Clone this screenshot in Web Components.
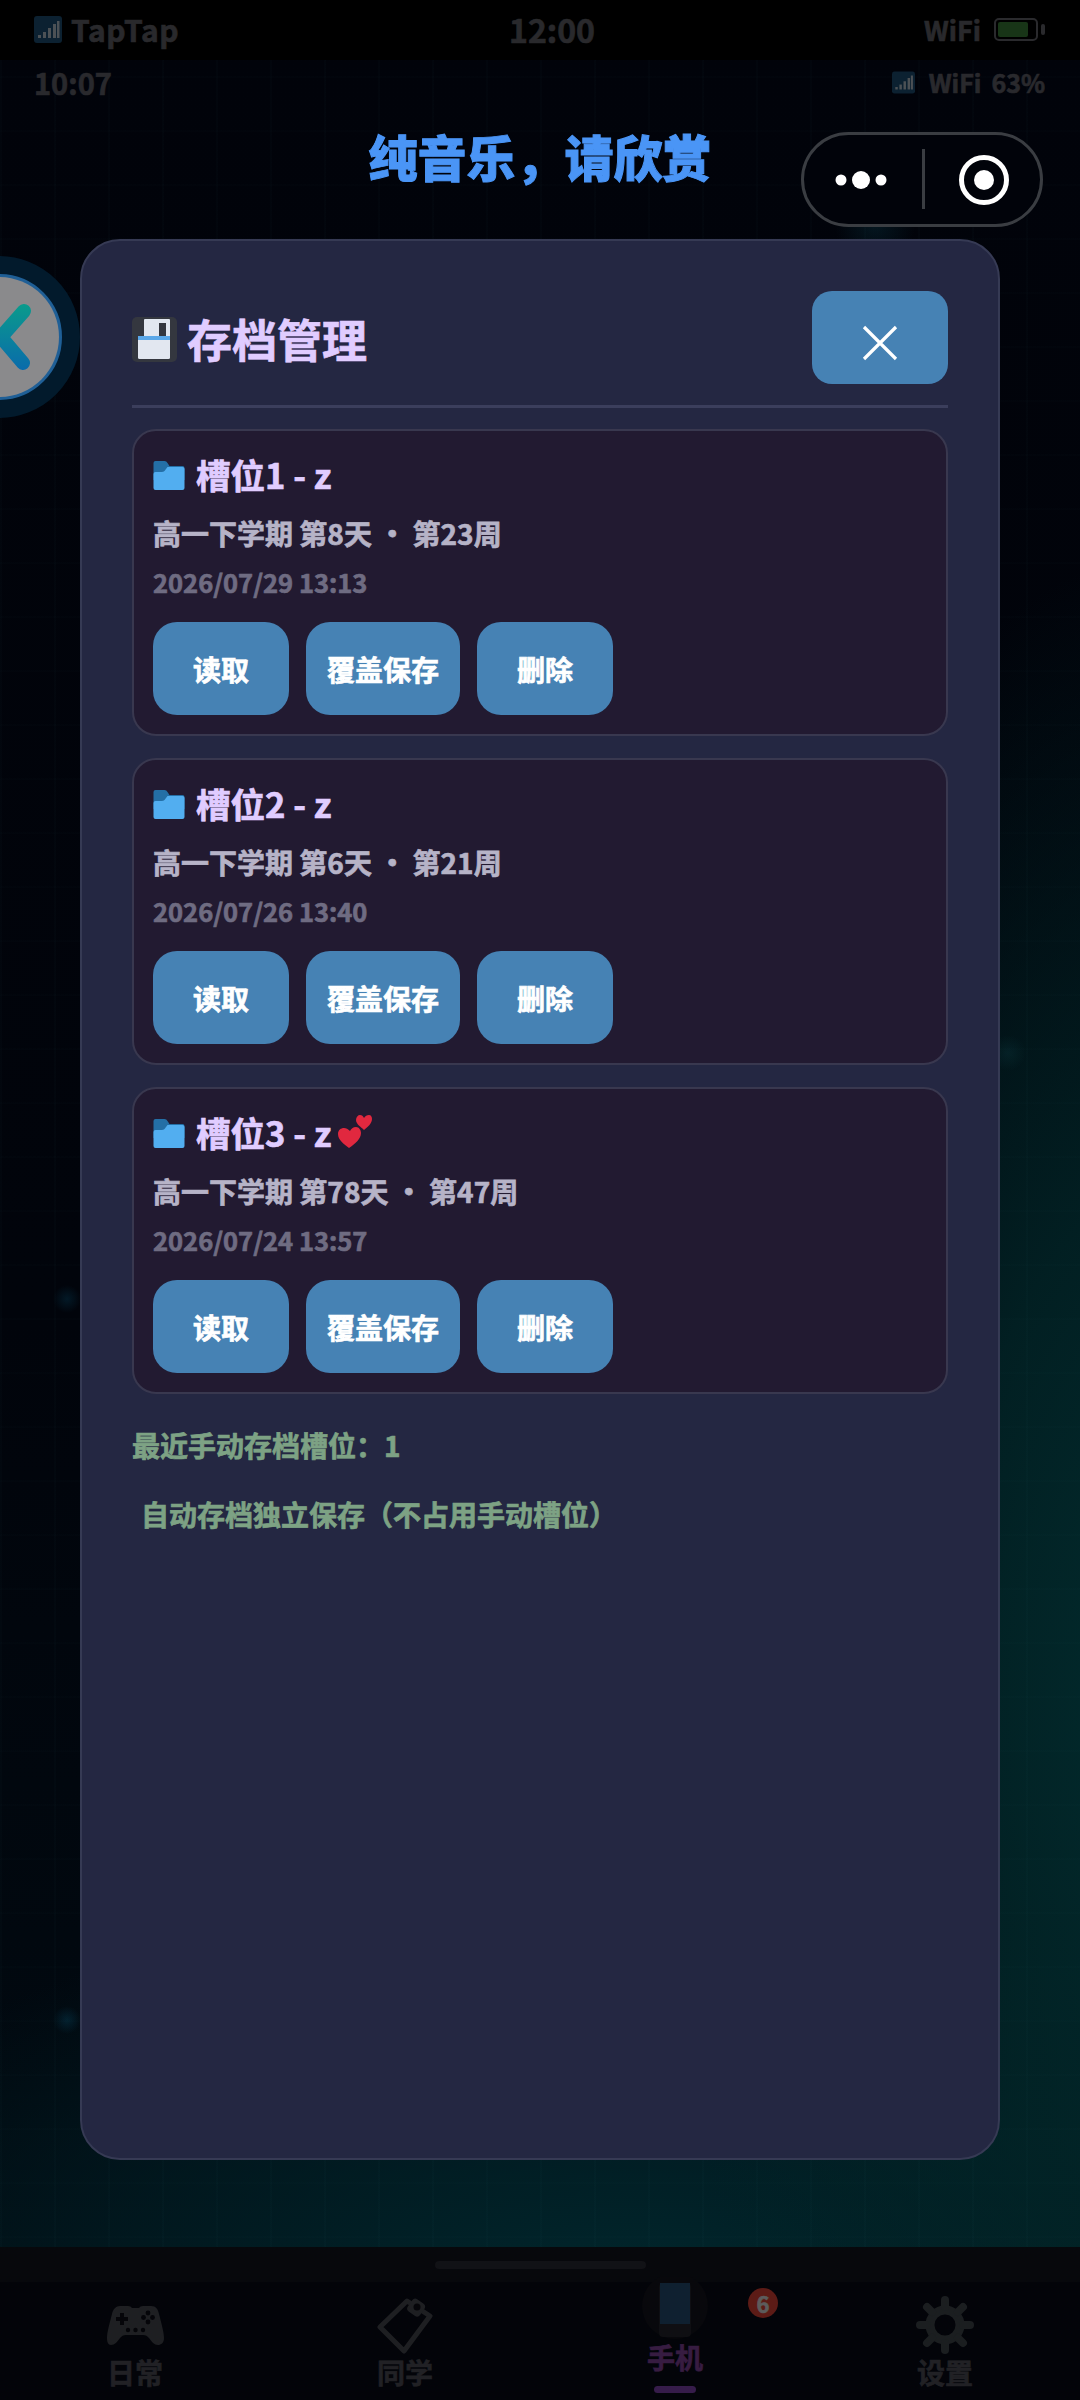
<!DOCTYPE html>
<html lang="zh">
<head>
<meta charset="utf-8">
<title>存档管理</title>
<style>
    html, body { margin: 0; padding: 0; background: #000; }
    body { font-family: "Noto Sans CJK SC", "Noto Sans", sans-serif; font-weight: 700; }
</style>
</head>
<body>

<phone-frame>
    <system-bar slot="system"></system-bar>
    <app-bar slot="appbar"></app-bar>
    <page-title slot="title">纯音乐，请欣赏</page-title>
    <capsule-menu slot="over"></capsule-menu>
    <back-fab slot="over"></back-fab>

    <save-modal slot="over" heading="存档管理">
        <save-slot name="槽位1 - z" term="高一下学期 第8天 · 第23周" date="2026/07/29 13:13">
            <save-button>读取</save-button>
            <save-button>覆盖保存</save-button>
            <save-button>删除</save-button>
        </save-slot>
        <save-slot name="槽位2 - z" term="高一下学期 第6天 · 第21周" date="2026/07/26 13:40">
            <save-button>读取</save-button>
            <save-button>覆盖保存</save-button>
            <save-button>删除</save-button>
        </save-slot>
        <save-slot name="槽位3 - z" term="高一下学期 第78天 · 第47周" date="2026/07/24 13:57" hearts>
            <save-button>读取</save-button>
            <save-button>覆盖保存</save-button>
            <save-button>删除</save-button>
        </save-slot>
        <save-note>最近手动存档槽位：1</save-note>
        <save-note indent>自动存档独立保存（不占用手动槽位）</save-note>
    </save-modal>

    <bottom-nav slot="nav">
        <nav-item label="日常">
            <svg width="57" height="40" viewBox="0 0 57 40">
                <path fill="#1e1f22" d="M13 1h8q3 0 4 2h7q1-2 4-2h8c5 0 7 3 8 8 2 8 5 18 5 24 0 5-3 7-6 7-4 0-6-3-9-7-2-2-3-3-6-3H19c-3 0-4 1-6 3-3 4-5 7-9 7-3 0-4-3-4-7 0-6 3-16 5-24 1-5 4-8 8-8z"/>
                <path fill="#050509" d="M13 8h4v4h4v4h-4v4h-4v-4H9v-4h4z"/>
                <g fill="#050509">
                    <circle cx="41" cy="8" r="2.4"/><circle cx="41" cy="17" r="2.4"/>
                    <circle cx="36.500" cy="12.500" r="2.400"/><circle cx="45.500" cy="12.500" r="2.400"/>
                    <circle cx="21" cy="25" r="2.200"/><circle cx="28.500" cy="25" r="2.200"/><circle cx="36" cy="25" r="2.200"/>
                </g>
            </svg>
        </nav-item>
        <nav-item label="同学">
            <svg width="58" height="58" viewBox="0 0 58 58">
                <path fill="none" stroke="#1e1f22" stroke-width="5" stroke-linejoin="round" d="M4 31L31 5 54 20 28 55z"/>
                <rect x="33" y="4" width="15" height="15" rx="4" transform="rotate(35 40 11)" fill="#1e1f22"/>
                <circle cx="41" cy="11" r="3.500" fill="#050509"/>
            </svg>
        </nav-item>
        <nav-item label="手机" active>
            <svg width="66" height="66" viewBox="0 0 66 66" style="margin-top:-6px;margin-bottom:-6px">
                <circle cx="33" cy="29" r="33" fill="#08080c"/>
                <rect x="17" y="6" width="32" height="54" rx="4" fill="#0f0f13"/>
                <rect x="18" y="6" width="30" height="41" fill="#0f2030"/>
            </svg>
            <nav-badge slot="badge">6</nav-badge>
        </nav-item>
        <nav-item label="设置">
            <svg width="58" height="58" viewBox="-29 -29 58 58">
                <circle r="15" fill="none" stroke="#1b1e20" stroke-width="9"/>
                <g stroke="#1b1e20" stroke-width="8" stroke-linecap="round">
                    <path d="M0-18V-25"/><path d="M0 18V25"/><path d="M-18 0H-25"/><path d="M18 0H25"/>
                    <path d="M13 13L18 18"/><path d="M-13 13L-18 18"/><path d="M13-13L18-18"/><path d="M-13-13L-18-18"/>
                </g>
            </svg>
        </nav-item>
    </bottom-nav>
</phone-frame>

<script>
    // small helper so every element below stays a plain class with a shadow root
    function shadow(el, html) {
        el.attachShadow({ mode: 'open' });
        el.shadowRoot.innerHTML = html;
    }

    const signalSvg = (w, h) => `
        <svg width="${w}" height="${h}" viewBox="0 0 28 27">
            <rect width="28" height="27" rx="3" fill="#0c2131"/>
            <g fill="#4c5155">
                <rect x="4" y="19" width="3" height="3"/><rect x="9" y="16" width="3" height="6"/>
                <rect x="14" y="12" width="3" height="10"/><rect x="19" y="8" width="3" height="14"/>
                <rect x="23" y="5" width="2.500" height="17"/>
            </g>
        </svg>`;

    class PhoneFrame extends HTMLElement {
        constructor() {
            super();
            shadow(this, `
                <style>
                    :host {
                        display: block;
                        position: relative;
                        width: 1080px;
                        height: 2400px;
                        overflow: hidden;
                        background:
                            radial-gradient(circle 14px at 67px 1299px, rgba(10,110,150,.2), transparent),
                            radial-gradient(circle 14px at 67px 2020px, rgba(10,110,150,.22), transparent),
                            radial-gradient(circle 18px at 1008px 1053px, rgba(30,120,130,.12), transparent),
                            radial-gradient(circle 40px at 875px 225px, rgba(20,110,130,.18), transparent),
                            repeating-linear-gradient(90deg, rgba(70,160,170,.02) 0 2px, transparent 2px 54px),
                            repeating-linear-gradient(0deg, rgba(70,160,170,.012) 0 2px, transparent 2px 54px),
                            radial-gradient(ellipse 520px 1150px at 1180px 1700px, #022c2e 0%, rgba(2,38,40,.8) 45%, transparent 100%),
                            radial-gradient(ellipse 900px 420px at 640px 2300px, #01272d 0%, rgba(1,34,40,.55) 60%, transparent 100%),
                            linear-gradient(180deg, #01030a 0%, #01040b 55%, #010b12 100%);
                        font-family: "Noto Sans CJK SC", "Noto Sans", sans-serif;
                        font-weight: 700;
                        -webkit-text-stroke: .7px currentColor;
                    }
                    .column {
                        display: flex;
                        flex-direction: column;
                        height: 100%;
                    }
                    .grow { flex: 1; }
                </style>
                <div class="column">
                    <slot name="system"></slot>
                    <slot name="appbar"></slot>
                    <slot name="title"></slot>
                    <div class="grow"></div>
                    <slot name="nav"></slot>
                </div>
                <slot name="over"></slot>
            `);
        }
    }

    class SystemBar extends HTMLElement {
        constructor() {
            super();
            shadow(this, `
                <style>
                    :host {
                        display: grid;
                        grid-template-columns: 1fr auto 1fr;
                        align-items: center;
                        height: 60px;
                        padding: 0 34px 2px;
                        box-sizing: border-box;
                        background: #000;
                        color: #29292c;
                    }
                    .left, .right { display: flex; align-items: center; }
                    .left { gap: 9px; font-size: 30px; letter-spacing: .5px; }
                    .right { justify-content: flex-end; gap: 13px; font-size: 27px; }
                    .time { font-size: 32px; margin-left: 24px; }
                    .battery {
                        position: relative;
                        width: 44px;
                        height: 23px;
                        box-sizing: border-box;
                        border: 2px solid #2a2a2d;
                        border-radius: 5px;
                        padding: 2px;
                        margin-right: 8px;
                    }
                    .battery i { display: block; width: 30px; height: 100%; background: #183517; border-radius: 2px; }
                    .battery::after {
                        content: '';
                        position: absolute;
                        right: -9px;
                        top: 4px;
                        width: 4px;
                        height: 11px;
                        background: #2a2a2d;
                        border-radius: 2px;
                    }
                </style>
                <div class="left">${signalSvg(28, 27)}<span>TapTap</span></div>
                <div class="time">12:00</div>
                <div class="right"><span>WiFi</span><div class="battery"><i></i></div></div>
            `);
        }
    }

    class AppBar extends HTMLElement {
        constructor() {
            super();
            shadow(this, `
                <style>
                    :host {
                        display: flex;
                        align-items: center;
                        justify-content: space-between;
                        height: 44px;
                        padding: 0 35px 0 34px;
                        color: #29292d;
                        font-size: 29px;
                    }
                    .right { display: flex; align-items: center; gap: 10px; font-size: 25px; }
                    .right svg { margin-right: 4px; }
                </style>
                <span>10:07</span>
                <div class="right">${signalSvg(23, 23)}<span>WiFi</span><span>63%</span></div>
            `);
        }
    }

    class PageTitle extends HTMLElement {
        constructor() {
            super();
            shadow(this, `
                <style>
                    :host {
                        display: block;
                        margin-top: 19px;
                        text-align: center;
                        color: #4a95f6;
                        font-size: 49px;
                        line-height: 66px;
                        font-weight: 900;
                        -webkit-text-stroke: 1px currentColor;
                    }
                </style>
                <slot></slot>
            `);
        }
    }

    class CapsuleMenu extends HTMLElement {
        constructor() {
            super();
            shadow(this, `
                <style>
                    :host {
                        position: absolute;
                        left: 801px;
                        top: 132px;
                        width: 242px;
                        height: 95px;
                        display: flex;
                        box-sizing: border-box;
                        border: 3px solid #3a3d42;
                        border-radius: 48px;
                        background: #01030a;
                    }
                    .side { display: flex; align-items: center; justify-content: center; }
                    .more { width: 118px; padding-right: 4px; box-sizing: border-box; }
                    .rec { flex: 1; padding-left: 3px; }
                    .line { width: 3px; height: 60px; margin-top: 14px; background: #3a3d42; }
                </style>
                <div class="side more">
                    <svg width="60" height="20" viewBox="0 0 60 20" fill="#fff">
                        <circle cx="10" cy="10" r="5.500"/><circle cx="30" cy="10" r="9"/><circle cx="50" cy="10" r="5.500"/>
                    </svg>
                </div>
                <div class="line"></div>
                <div class="side rec">
                    <svg width="52" height="52" viewBox="0 0 52 52">
                        <circle cx="26" cy="26" r="22.500" fill="none" stroke="#fff" stroke-width="5"/>
                        <circle cx="26" cy="26" r="10" fill="#fff"/>
                    </svg>
                </div>
            `);
        }
    }

    class BackFab extends HTMLElement {
        constructor() {
            super();
            shadow(this, `
                <style>
                    :host {
                        position: absolute;
                        left: -82px;
                        top: 256px;
                        width: 162px;
                        height: 162px;
                        box-sizing: border-box;
                        border-radius: 50%;
                        border: 18px solid #021a2c;
                        background: #1f5f96;
                        padding: 3px;
                    }
                    .face {
                        width: 100%;
                        height: 100%;
                        border-radius: 50%;
                        background: #8a8a8c;
                        overflow: hidden;
                    }
                    svg { display: block; }
                </style>
                <div class="face">
                    <svg width="120" height="120" viewBox="0 0 120 120">
                        <defs>
                            <linearGradient id="chev" gradientUnits="userSpaceOnUse" x1="0" y1="28" x2="0" y2="92">
                                <stop offset="0" stop-color="#0a9a8c"/>
                                <stop offset="1" stop-color="#0a6cab"/>
                            </linearGradient>
                        </defs>
                        <path d="M85 34L62 60 84 86" fill="none" stroke="url(#chev)" stroke-width="14" stroke-linecap="round" stroke-linejoin="round"/>
                    </svg>
                </div>
            `);
        }
    }

    class SaveModal extends HTMLElement {
        constructor() {
            super();
            shadow(this, `
                <style>
                    :host {
                        position: absolute;
                        left: 80px;
                        top: 239px;
                        width: 920px;
                        height: 1921px;
                        box-sizing: border-box;
                        padding: 50px;
                        border: 2px solid #363a54;
                        border-radius: 40px;
                        background: #242742;
                    }
                    header {
                        display: flex;
                        align-items: center;
                        justify-content: space-between;
                        padding-bottom: 21px;
                        border-bottom: 3px solid #3b3e5c;
                        margin-bottom: 21px;
                    }
                    h2 {
                        display: flex;
                        align-items: center;
                        gap: 10px;
                        margin: 0;
                        padding-top: 2px;
                        font-size: 45px;
                        line-height: 60px;
                        font-weight: 700;
                        color: #e0ccff;
                    }
                    h2 svg { margin-top: 2px; }
                    .close {
                        display: flex;
                        align-items: center;
                        justify-content: center;
                        width: 136px;
                        height: 93px;
                        padding-top: 11px;
                        box-sizing: border-box;
                        border-radius: 20px;
                        background: #4682b4;
                    }
                    .list { display: flex; flex-direction: column; gap: 22px; }
                    svg { display: block; }
                </style>
                <header>
                    <h2>
                        <svg width="45" height="45" viewBox="0 0 45 45">
                            <rect width="45" height="45" rx="5" fill="#34373f"/>
                            <rect x="12" y="2" width="26" height="22" rx="1" fill="#e2e7f0"/>
                            <rect x="27" y="6" width="7" height="16" fill="#34373f"/>
                            <rect x="6" y="19" width="32" height="23" rx="1.500" fill="#e2e7f0"/>
                            <rect x="6" y="19" width="32" height="4" fill="#5aa7e8"/>
                        </svg>
                        <span id="heading"></span>
                    </h2>
                    <div class="close">
                        <svg width="36" height="36" viewBox="0 0 36 36">
                            <path d="M2 2L34 34M34 2L2 34" stroke="#fff" stroke-width="3.200"/>
                        </svg>
                    </div>
                </header>
                <div class="list"><slot></slot></div>
            `);
        }

        connectedCallback() {
            this.shadowRoot.querySelector('#heading').textContent = this.getAttribute('heading');
        }
    }

    class SaveSlot extends HTMLElement {
        constructor() {
            super();
            shadow(this, `
                <style>
                    :host {
                        display: block;
                        box-sizing: border-box;
                        height: 307px;
                        padding: 18px 19px 0;
                        border: 2px solid #39384f;
                        border-radius: 24px;
                        background: #221a31;
                    }
                    .name {
                        display: flex;
                        align-items: center;
                        height: 50px;
                        font-size: 34.500px;
                        color: #e0ccff;
                    }
                    .name svg.folder { margin: 3px 11px 0 0; }
                    .hearts { margin-left: 7px; margin-top: 0; display: none; }
                    :host([hearts]) .hearts { display: block; }
                    .term {
                        margin-top: 17px;
                        font-size: 28px;
                        line-height: 34px;
                        color: #b6b3c7;
                    }
                    .date {
                        margin-top: 15px;
                        font-size: 25.500px;
                        line-height: 34px;
                        color: #6f6c82;
                    }
                    .actions { display: flex; gap: 17px; margin-top: 23px; }
                </style>
                <div class="name">
                    <svg class="folder" width="32" height="29" viewBox="0 0 31 29">
                        <path fill="#246fa6" d="M2 0h9q2 0 3 2l2 3h13q2 0 2 2v12H0V2q0-2 2-2z"/>
                        <path fill="#52aef0" d="M2 11h6q2 0 3-1l3-4h15q2 0 2 2v19q0 2-2 2H2q-2 0-2-2V13q0-2 2-2z"/>
                    </svg>
                    <span id="name"></span>
                    <svg class="hearts" width="34" height="34" viewBox="0 0 34 34" fill="#e1283f">
                        <path d="M11 33C6 29 0 25 0 19c0-4 3-6 6-6 2 0 4 1 6 3 1-2 3-4 6-4 3 0 5 3 5 6 0 6-6 11-12 15z"/>
                        <path d="M26 15c-3-3-8-6-8-10 0-3 2-5 4-5 2 0 3 1 4 3 1-2 3-3 5-3 2 0 3 2 3 4 0 4-4 8-8 11z"/>
                    </svg>
                </div>
                <div class="term" id="term"></div>
                <div class="date" id="date"></div>
                <div class="actions"><slot></slot></div>
            `);
        }

        connectedCallback() {
            for (const key of ['name', 'term', 'date']) {
                this.shadowRoot.querySelector('#' + key).textContent = this.getAttribute(key);
            }
        }
    }

    class SaveButton extends HTMLElement {
        constructor() {
            super();
            shadow(this, `
                <style>
                    :host {
                        display: flex;
                        align-items: center;
                        justify-content: center;
                        box-sizing: border-box;
                        min-width: 136px;
                        height: 93px;
                        padding: 0 21px;
                        border-radius: 24px;
                        background: #4682b4;
                        color: #fff;
                        font-size: 28px;
                    }
                </style>
                <slot></slot>
            `);
        }
    }

    class SaveNote extends HTMLElement {
        constructor() {
            super();
            shadow(this, `
                <style>
                    :host {
                        display: block;
                        margin-top: 10px;
                        font-size: 28px;
                        line-height: 38px;
                        color: #7da284;
                    }
                    :host([indent]) { padding-left: 9px; margin-top: 9px; }
                </style>
                <slot></slot>
            `);
        }
    }

    class BottomNav extends HTMLElement {
        constructor() {
            super();
            shadow(this, `
                <style>
                    :host {
                        display: block;
                        height: 153px;
                        background: #030409;
                    }
                    .home {
                        display: flex;
                        align-items: center;
                        justify-content: center;
                        height: 35px;
                        background: #07080c;
                    }
                    .home i { display: block; width: 211px; height: 8px; border-radius: 4px; background: #111216; }
                    .items { display: grid; grid-template-columns: repeat(4, 270px); }
                </style>
                <div class="home"><i></i></div>
                <div class="items"><slot></slot></div>
            `);
        }
    }

    class NavItem extends HTMLElement {
        constructor() {
            super();
            shadow(this, `
                <style>
                    :host {
                        display: flex;
                        flex-direction: column;
                        align-items: center;
                        position: relative;
                        padding-top: 15px;
                        color: #212125;
                        font-size: 28px;
                    }
                    .icon {
                        display: flex;
                        align-items: center;
                        justify-content: center;
                        height: 56px;
                    }
                    .label { margin-top: 5px; line-height: 28px; }
                    .bar { display: none; width: 42px; height: 7px; margin-top: 15px; border-radius: 4px; background: #361c4a; }
                    :host([active]) { padding-top: 1px; color: #371c41; }
                    :host([active]) .icon { height: 54px; }
                    :host([active]) .label { margin-top: 6px; }
                    :host([active]) .bar { display: block; }
                </style>
                <div class="icon"><slot></slot></div>
                <div class="label" id="label"></div>
                <div class="bar"></div>
                <slot name="badge"></slot>
            `);
        }

        connectedCallback() {
            this.shadowRoot.querySelector('#label').textContent = this.getAttribute('label');
        }
    }

    class NavBadge extends HTMLElement {
        constructor() {
            super();
            shadow(this, `
                <style>
                    :host {
                        position: absolute;
                        left: 208px;
                        top: 6px;
                        width: 30px;
                        height: 30px;
                        display: flex;
                        align-items: center;
                        justify-content: center;
                        border-radius: 50%;
                        background: #5c1b16;
                        color: #5c5c5c;
                        font-size: 22px;
                    }
                </style>
                <slot></slot>
            `);
        }
    }

    customElements.define('phone-frame', PhoneFrame);
    customElements.define('system-bar', SystemBar);
    customElements.define('app-bar', AppBar);
    customElements.define('page-title', PageTitle);
    customElements.define('capsule-menu', CapsuleMenu);
    customElements.define('back-fab', BackFab);
    customElements.define('save-modal', SaveModal);
    customElements.define('save-slot', SaveSlot);
    customElements.define('save-button', SaveButton);
    customElements.define('save-note', SaveNote);
    customElements.define('bottom-nav', BottomNav);
    customElements.define('nav-item', NavItem);
    customElements.define('nav-badge', NavBadge);
</script>
</body>
</html>
